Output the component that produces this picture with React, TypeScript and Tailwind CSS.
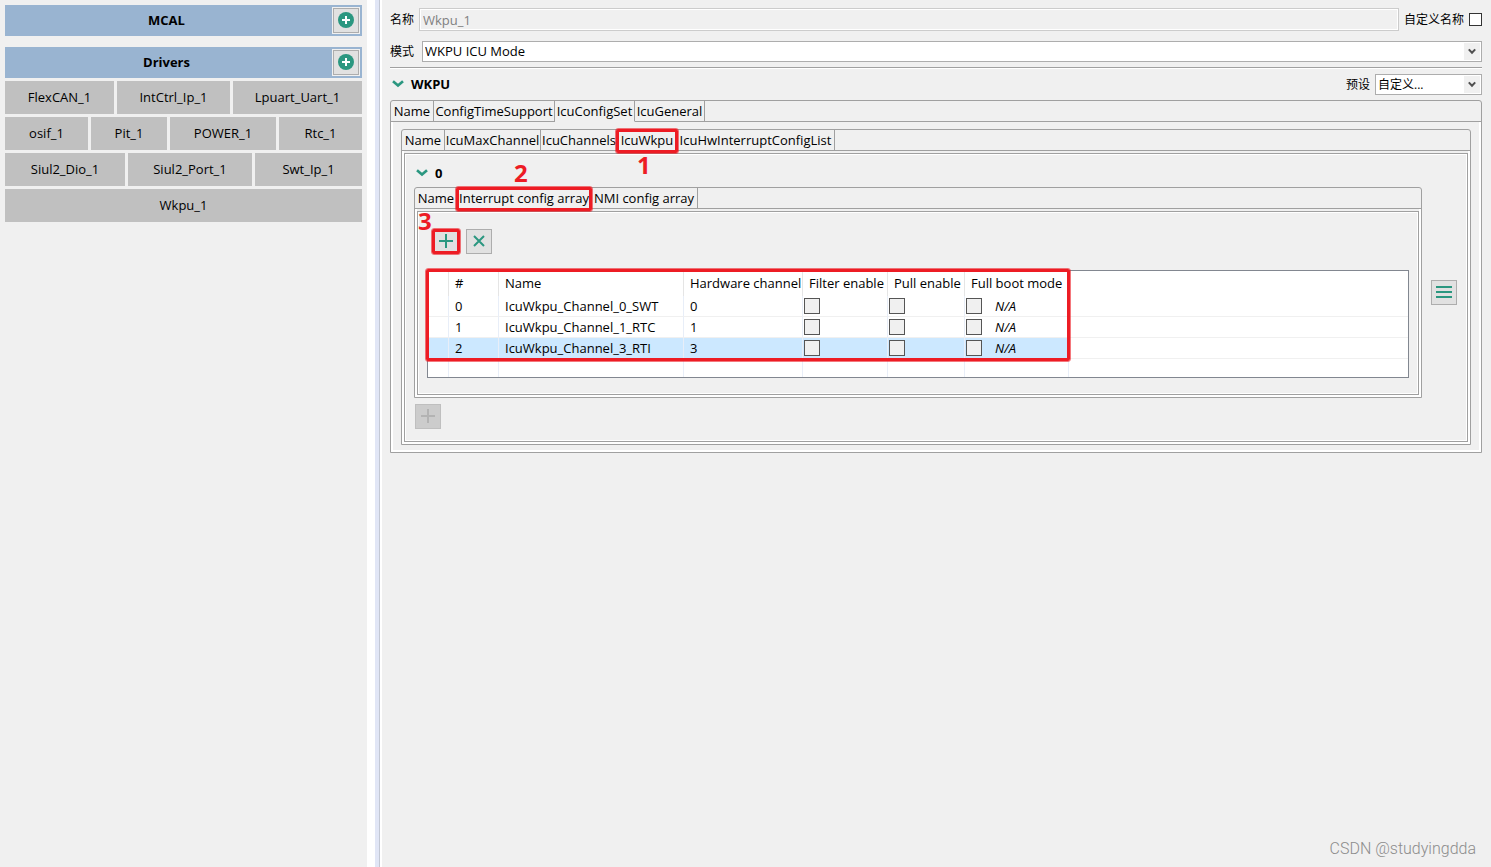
import { ReactNode } from "react"
import clsx from "clsx"

interface TabItem {
    label: string
    width: string
    mark?: string
    markClass?: string
}

const driverRows = [
    {
        cols: "grid-cols-[109fr_113fr_129fr]",
        items: ["FlexCAN_1", "IntCtrl_Ip_1", "Lpuart_Uart_1"],
    },
    {
        cols: "grid-cols-[83fr_76fr_106fr_83fr]",
        items: ["osif_1", "Pit_1", "POWER_1", "Rtc_1"],
    },
    {
        cols: "grid-cols-[120fr_124fr_107fr]",
        items: ["Siul2_Dio_1", "Siul2_Port_1", "Swt_Ip_1"],
    },
    { cols: "grid-cols-1", items: ["Wkpu_1"] },
]

const wkpuTabs: TabItem[] = [
    { label: "Name", width: "w-[43px]" },
    { label: "ConfigTimeSupport", width: "w-[121px]" },
    { label: "IcuConfigSet", width: "w-[80px]" },
    { label: "IcuGeneral", width: "w-[70px]" },
]

const configSetTabs: TabItem[] = [
    { label: "Name", width: "w-[43px]" },
    { label: "IcuMaxChannel", width: "w-[96px]" },
    { label: "IcuChannels", width: "w-[77px]" },
    { label: "IcuWkpu", width: "w-[59px]", mark: "1", markClass: "top-[23px] left-[19px]" },
    { label: "IcuHwInterruptConfigList", width: "w-[158px]" },
]

const icuWkpuTabs: TabItem[] = [
    { label: "Name", width: "w-[43px]" },
    {
        label: "Interrupt config array",
        width: "w-[133px]",
        mark: "2",
        markClass: "-top-[27px] left-14",
    },
    { label: "NMI config array", width: "w-[107px]" },
]

const columns = [
    { label: "", width: "w-[21px]" },
    { label: "#", width: "w-[50px]" },
    { label: "Name", width: "w-[185px]" },
    { label: "Hardware channel", width: "w-[119px]" },
    { label: "Filter enable", width: "w-[85px]" },
    { label: "Pull enable", width: "w-[77px]" },
    { label: "Full boot mode", width: "w-[104px]" },
]

const channels = [
    { id: 0, name: "IcuWkpu_Channel_0_SWT", hw: 0 },
    { id: 1, name: "IcuWkpu_Channel_1_RTC", hw: 1 },
    { id: 2, name: "IcuWkpu_Channel_3_RTI", hw: 3 },
]

function Mark({ className }: { className: string }) {
    return (
        <span
            className={clsx(
                "pointer-events-none absolute z-10 rounded-xs border-3 border-[#ed1c24] outline-1 outline-[#ed1c24]/60",
                className
            )}
        />
    )
}

function MarkNumber({ className, children }: { className?: string; children: ReactNode }) {
    return (
        <span
            className={clsx(
                "pointer-events-none absolute z-10 text-2xl leading-6 font-bold text-[#ed1c24]",
                className
            )}
        >
            {children}
        </span>
    )
}

function Chevron() {
    return (
        <svg width="12" height="8" viewBox="0 0 12 8" fill="none">
            <path d="M1 1.2 6 5.6 11 1.2" stroke="#2b9780" strokeWidth="2.6" />
        </svg>
    )
}

function GroupHeader({ title }: { title: string }) {
    return (
        <div className="flex h-[31px] items-center bg-[#99b4d1] pr-0.5">
            <h2 className="flex-1 pr-1 pb-0.5 text-center font-bold">{title}</h2>
            <button
                aria-label={`Add ${title}`}
                className="flex h-[27px] w-7 items-center justify-center border border-[#f0f0f0] bg-[#e1e1e1] pb-px outline-1 -outline-offset-2 outline-[#adadad]"
            >
                <svg width="16" height="16" viewBox="0 0 16 16">
                    <circle cx="8" cy="8" r="8" fill="#2b9780" />
                    <path d="M8 4v8M4 8h8" stroke="#fff" strokeWidth="2" />
                </svg>
            </button>
        </div>
    )
}

function Combo({ id, value, className }: { id: string; value: string; className?: string }) {
    return (
        <div className={clsx("relative h-[21px]", className)}>
            <select
                id={id}
                className="block h-full w-full appearance-none border border-[#adadad] bg-white pr-5 pl-0.5 leading-[19px]"
            >
                <option>{value}</option>
            </select>
            <span className="pointer-events-none absolute inset-y-0.5 right-0.5 flex w-4 items-center justify-center bg-[#f0f0f0]">
                <svg width="8" height="7" viewBox="0 0 8 7" fill="none">
                    <path d="M0.8 1.4 4 4.8 7.2 1.4" stroke="#505050" strokeWidth="2" />
                </svg>
            </span>
        </div>
    )
}

function IconButton({
    label,
    disabled,
    children,
}: {
    label: string
    disabled?: boolean
    children: ReactNode
}) {
    return (
        <button
            aria-label={label}
            disabled={disabled}
            className="flex h-[25px] w-[26px] shrink-0 items-center justify-center border border-[#adadad] bg-[#e1e1e1] pb-px text-[#2b9780] disabled:border-[#bfbfbf] disabled:bg-[#cccccc] disabled:text-[#b3b3b3]"
        >
            {children}
        </button>
    )
}

function PlusIcon() {
    return (
        <svg width="14" height="14" viewBox="0 0 14 14">
            <path d="M7 0v14M0 7h14" stroke="currentColor" strokeWidth="2" />
        </svg>
    )
}

function TabFolder({
    tabs,
    active,
    children,
}: {
    tabs: TabItem[]
    active: string
    children: ReactNode
}) {
    return (
        <div className="min-w-0 flex-1 rounded-t-[3px] border border-[#a0a0a0]">
            <div role="tablist" className="flex h-[21px]">
                {tabs.map((tab) => (
                    <button
                        key={tab.label}
                        role="tab"
                        aria-selected={tab.label === active}
                        className={clsx(
                            "relative flex shrink-0 items-center justify-center border-r border-b border-r-[#a0a0a0] whitespace-nowrap",
                            tab.width,
                            tab.label === active
                                ? "border-b-transparent"
                                : "border-b-[#a0a0a0]"
                        )}
                    >
                        {tab.label}
                        {tab.mark && (
                            <>
                                <Mark className="-inset-x-0.5 -top-px -bottom-[3px]" />
                                <MarkNumber className={tab.markClass}>{tab.mark}</MarkNumber>
                            </>
                        )}
                    </button>
                ))}
                <div className="flex-1 border-b border-[#a0a0a0]" />
            </div>
            {children}
        </div>
    )
}

// etched frame used inside the nested folders
function Frame({ className, children }: { className?: string; children: ReactNode }) {
    return (
        <div className="border-x-2 border-b-2 border-white pt-0.5">
            <div className="border border-[#a0a0a0]">
                <div className={clsx("border border-white", className)}>{children}</div>
            </div>
        </div>
    )
}

function CellCheck({ label }: { label: string }) {
    return (
        <input
            type="checkbox"
            aria-label={label}
            className="block size-4 appearance-none border border-[#555555] bg-[#f0f0f0]"
        />
    )
}

function ChannelTable() {
    return (
        <div className="relative h-[108px] border border-[#828790] bg-white">
            <table className="w-full table-fixed border-separate border-spacing-0 text-left">
                <thead>
                    <tr className="h-[25px]">
                        {columns.map((col) => (
                            <th
                                key={col.label}
                                className={clsx(
                                    "border-r border-[#e5e5e5] p-0 pb-0.5 pl-1.5 font-normal whitespace-nowrap",
                                    col.width
                                )}
                            >
                                {col.label}
                            </th>
                        ))}
                        <th className="p-0" />
                    </tr>
                </thead>
                <tbody>
                    {channels.map((ch) => (
                        <tr
                            key={ch.id}
                            className={clsx(
                                "h-[21px] *:border-b *:border-b-[#f0f0f0] *:p-0 *:not-last:border-r *:not-last:border-r-[#e8eef8]",
                                ch.id === 2 && "*:not-last:bg-[#cce8ff]"
                            )}
                        >
                            <td />
                            <td>
                                <div className="pl-1.5">{ch.id}</div>
                            </td>
                            <td>
                                <div className="pl-1.5">{ch.name}</div>
                            </td>
                            <td>
                                <div className="pl-1.5">{ch.hw}</div>
                            </td>
                            <td>
                                <div className="pl-px">
                                    <CellCheck label={`Filter enable ${ch.id}`} />
                                </div>
                            </td>
                            <td>
                                <div className="pl-px">
                                    <CellCheck label={`Pull enable ${ch.id}`} />
                                </div>
                            </td>
                            <td>
                                <div className="flex items-center gap-[13px] pl-px">
                                    <CellCheck label={`Full boot mode ${ch.id}`} />
                                    <i>N/A</i>
                                </div>
                            </td>
                            <td />
                        </tr>
                    ))}
                    <tr className="h-[18px] *:not-last:border-r *:not-last:border-[#e8eef8]">
                        {columns.map((col) => (
                            <td key={col.label} />
                        ))}
                        <td />
                    </tr>
                </tbody>
            </table>
            <Mark className="-top-0.5 -left-0.5 h-[92px] w-[644px]" />
        </div>
    )
}

function Sidebar() {
    return (
        <aside className="w-[367px] shrink-0 bg-[#f0f0f0] p-[5px]">
            <GroupHeader title="MCAL" />
            <div className="mt-[11px] flex flex-col gap-[3px]">
                <GroupHeader title="Drivers" />
                {driverRows.map((row) => (
                    <div key={row.cols} className={clsx("grid gap-[3px]", row.cols)}>
                        {row.items.map((item) => (
                            <button key={item} className="h-[33px] bg-[#c0c0c0] pb-0.5">
                                {item}
                            </button>
                        ))}
                    </div>
                ))}
            </div>
        </aside>
    )
}

export default function App() {
    return (
        <div className="flex min-h-screen bg-white font-['Open_Sans','Noto_Sans_CJK_SC',sans-serif] text-[13px] leading-4 text-black">
            <Sidebar />
            <div className="ml-2 w-[5px] shrink-0 border-r border-[#c3c8d4] bg-[#e1e6f6]" />

            <main className="relative ml-0.5 min-w-0 flex-1 bg-[#f0f0f0] py-2 pr-[9px] pl-2">
                {/* Name */}
                <div className="flex items-center">
                    <label htmlFor="name" className="w-[29px] text-xs">
                        名称
                    </label>
                    <input
                        id="name"
                        disabled
                        defaultValue="Wkpu_1"
                        className="h-[23px] min-w-0 flex-1 border border-[#cccccc] bg-[#f0f0f0] px-[3px] text-[#808080] outline-1 -outline-offset-2 outline-white"
                    />
                    <label htmlFor="custom" className="px-[5px] text-xs">
                        自定义名称
                    </label>
                    <input
                        id="custom"
                        type="checkbox"
                        className="size-[13px] appearance-none border border-[#333333] bg-white"
                    />
                </div>

                {/* Mode */}
                <div className="mt-2.5 flex items-center">
                    <label htmlFor="mode" className="w-8 text-xs">
                        模式
                    </label>
                    <Combo id="mode" value="WKPU ICU Mode" className="flex-1" />
                </div>

                <div className="mt-[5px] h-0.5 border-t border-b border-t-[#a0a0a0] border-b-white" />

                <div className="mt-[5px] mb-[5px] flex items-center">
                    <button className="flex items-center gap-[7px] pb-0.5 pl-0.5 font-bold">
                        <Chevron />
                        WKPU
                    </button>
                    <label htmlFor="preset" className="ml-auto pr-[5px] text-xs">
                        预设
                    </label>
                    <Combo id="preset" value="自定义..." className="w-[107px] text-xs" />
                </div>

                <TabFolder active="IcuConfigSet" tabs={wkpuTabs}>
                    <div className="border-x-2 border-b-2 border-white px-2 pt-[7px] pb-[5px]">
                        <TabFolder active="IcuWkpu" tabs={configSetTabs}>
                            <Frame className="pr-[9px] pb-[11px] pl-2">
                                <button className="flex h-8 items-center gap-[7px] pt-1 pl-0.5 font-bold">
                                    <Chevron />0
                                </button>
                                <div className="flex items-center gap-[9px]">
                                    <TabFolder active="Interrupt config array" tabs={icuWkpuTabs}>
                                        <Frame className="px-2 pt-4 pb-[15px]">
                                            <div className="flex gap-[7px] pb-4 pl-1.5">
                                                <div className="relative">
                                                    <IconButton label="Add">
                                                        <PlusIcon />
                                                    </IconButton>
                                                    <Mark className="-inset-x-px inset-y-0" />
                                                    <MarkNumber className="-top-5 -left-[15px]">
                                                        3
                                                    </MarkNumber>
                                                </div>
                                                <IconButton label="Remove">
                                                    <svg width="12" height="12" viewBox="0 0 12 12">
                                                        <path
                                                            d="M1 1l10 10M11 1 1 11"
                                                            stroke="currentColor"
                                                            strokeWidth="2"
                                                        />
                                                    </svg>
                                                </IconButton>
                                            </div>
                                            <ChannelTable />
                                        </Frame>
                                    </TabFolder>
                                    <IconButton label="Menu">
                                        <svg width="16" height="12" viewBox="0 0 16 12">
                                            <path
                                                d="M0 1h16M0 6h16M0 11h16"
                                                stroke="currentColor"
                                                strokeWidth="2"
                                            />
                                        </svg>
                                    </IconButton>
                                </div>
                                <div className="pt-1.5 pl-px">
                                    <IconButton label="Add item" disabled>
                                        <PlusIcon />
                                    </IconButton>
                                </div>
                            </Frame>
                        </TabFolder>
                    </div>
                </TabFolder>

                <p className="absolute right-[15px] bottom-1.5 font-['Roboto',sans-serif] text-base font-light text-[#8c8c8c]">
                    CSDN @studyingdda
                </p>
            </main>
        </div>
    )
}
